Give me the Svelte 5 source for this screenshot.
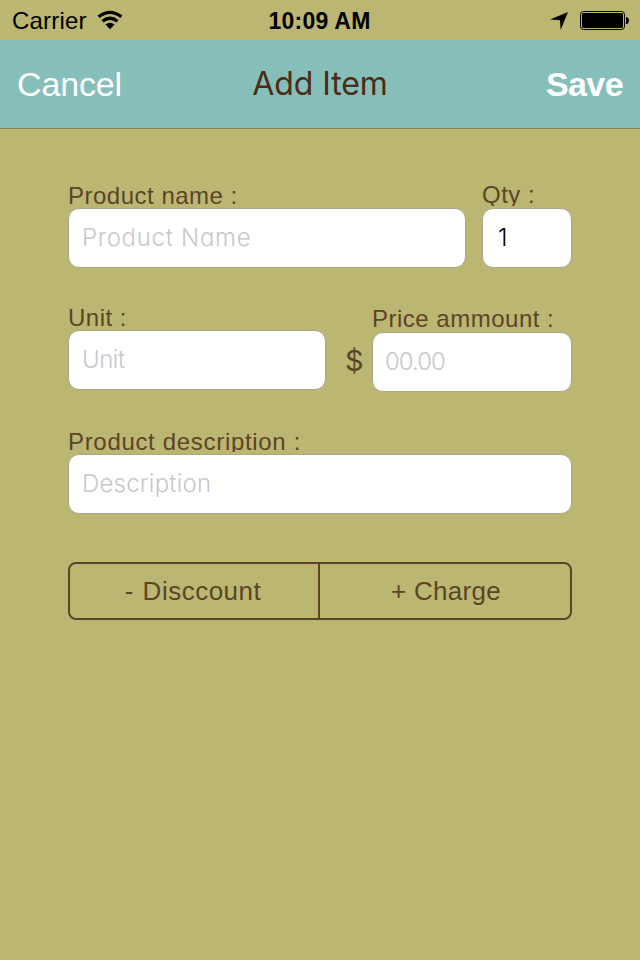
<script>
  let name = $state('');
  let qty = $state('1');
  let unit = $state('');
  let price = $state('');
  let description = $state('');
</script>

<div class="screen">
  <div class="status">
    <div class="left">
      <span class="carrier">Carrier</span>
      <svg class="wifi" width="26" height="20" viewBox="0 0 26 20">
        <g fill="none" stroke="#000" stroke-width="3.2">
          <path d="M1.6 6.8 Q13 -2.2 24.4 6.8" />
          <path d="M5.5 11.3 Q13 5.2 20.5 11.3" />
        </g>
        <path d="M8.4 14.6 Q13 10.8 17.6 14.6 L13 19.2Z" />
      </svg>
    </div>
    <span class="clock">10:09 AM</span>
    <div class="right">
      <svg class="arrow" width="18" height="18" viewBox="0 0 18 18"><path d="M18 0 L10.6 18 L10 8.2 L0 7.4Z" /></svg>
      <svg width="50" height="20" viewBox="0 0 50 20">
        <rect x="0.5" y="0.5" width="44" height="18" rx="3" fill="none" stroke="#000" />
        <rect x="2" y="2" width="41" height="15" rx="1.5" />
        <path d="M46 6 h1 q2 1 2 3.5 t-2 3.5 h-1Z" />
      </svg>
    </div>
  </div>

  <header>
    <span class="cancel">Cancel</span>
    <span class="title">Add Item</span>
    <span class="save">Save</span>
  </header>

  <main>
    <div class="row first">
      <div class="field name">
        <label for="name">Product name :</label>
        <input id="name" placeholder="Product Name" bind:value={name} />
      </div>
      <div class="field qty">
        <label for="qty">Qty :</label>
        <input id="qty" bind:value={qty} />
      </div>
    </div>
    <div class="row second">
      <div class="field unit">
        <label for="unit">Unit :</label>
        <input id="unit" placeholder="Unit" bind:value={unit} />
      </div>
      <span class="dollar">$</span>
      <div class="field price">
        <label for="price">Price ammount :</label>
        <input id="price" placeholder="00.00" bind:value={price} />
      </div>
    </div>
    <div class="field desc">
      <label for="desc">Product description :</label>
      <input id="desc" placeholder="Description" bind:value={description} />
    </div>
    <div class="segments">
      <button class="discount">- Disccount</button>
      <button class="charge">+ Charge</button>
    </div>
  </main>
</div>

<style>
  :global(body) { margin: 0; background: #bbb772; }
  .screen {
    width: 640px;
    height: 960px;
    overflow: hidden;
    background: #bbb772;
    color: #5d4427;
    font-family: "Liberation Sans", Arial, sans-serif;
  }
  .status {
    display: grid;
    grid-template-columns: 1fr auto 1fr;
    height: 40px;
    padding: 0 10px 0 12px;
    box-sizing: border-box;
    color: #000;
    line-height: 42px;
    font-size: 24px;
  }
  .left, .right { display: flex; }
  .right { justify-content: flex-end; }
  .carrier { letter-spacing: 0.2px; }
  .wifi { margin: 10px 0 0 10.5px; }
  .clock { font-weight: bold; font-size: 23px; letter-spacing: 0.25px; margin-left: -3px; }
  .right svg { margin-top: 11px; }
  .right .arrow { margin: 12px 12px 0 0; }
  header {
    display: grid;
    grid-template-columns: 1fr auto 1fr;
    height: 89px;
    box-sizing: border-box;
    padding: 0 17px;
    border-bottom: 1px solid #83805a;
    background: #86bfba;
    color: #fff;
    font-size: 34px;
    line-height: 88px;
  }
  .cancel { letter-spacing: -0.15px; }
  .title {
    font-family: Inter, sans-serif;
    font-size: 32px;
    font-weight: 400;
    color: #4b2c17;
    line-height: 87px;
    letter-spacing: -0.1px;
  }
  .save { text-align: right; font-weight: bold; letter-spacing: -0.6px; }
  main { padding: 55px 68px 0; }
  .row { display: flex; }
  .first { justify-content: space-between; }
  .second { margin-top: 38px; }
  .field { display: flex; flex-direction: column; }
  label {
    height: 22px;
    margin-bottom: 2px;
    white-space: nowrap;
    font-size: 24px;
    line-height: 24px;
    letter-spacing: 0.5px;
  }
  .qty label { line-height: 22px; overflow: hidden; }
  .desc label { letter-spacing: 0.68px; overflow: hidden; }
  input {
    width: 100%;
    height: 60px;
    box-sizing: border-box;
    margin: 0;
    padding: 0 13px 2px;
    border: 1px solid #a9a88c;
    border-radius: 11px;
    outline: none;
    background: #fff;
    color: #000;
    font: 300 24px Inter, sans-serif;
    font-feature-settings: "cv11";
  }
  input::placeholder { color: #c7c7cd; opacity: 1; }
  .name { width: 398px; }
  .name input { letter-spacing: 0.7px; }
  .qty { width: 90px; }
  .qty input { padding-left: 15px; }
  .unit { width: 258px; }
  .unit input { letter-spacing: -0.5px; }
  .price { width: 200px; padding-top: 2px; }
  .price label { line-height: 22px; }
  .price input { padding-left: 12px; letter-spacing: -1px; }
  .desc input { letter-spacing: 0.2px; }
  .dollar {
    width: 46px;
    box-sizing: border-box;
    padding: 13px 0 0 19px;
    height: 84px;
    font: 400 29px/84px Inter, sans-serif;
  }
  .desc { margin-top: 38px; }
  .segments {
    display: grid;
    grid-template-columns: 250px 1fr;
    height: 58px;
    box-sizing: border-box;
    margin-top: 48px;
    border: 2px solid #5d4427;
    border-radius: 8px;
  }
  button {
    padding: 0;
    border: 0;
    background: none;
    color: inherit;
    font: 26px "Liberation Sans", Arial, sans-serif;
    letter-spacing: 0.3px;
  }
  .charge { padding-left: 2px; }
  .discount {
    padding-right: 2px;
    border-right: 2px solid #5d4427;
    letter-spacing: 0.5px;
    word-spacing: 1px;
  }
</style>
